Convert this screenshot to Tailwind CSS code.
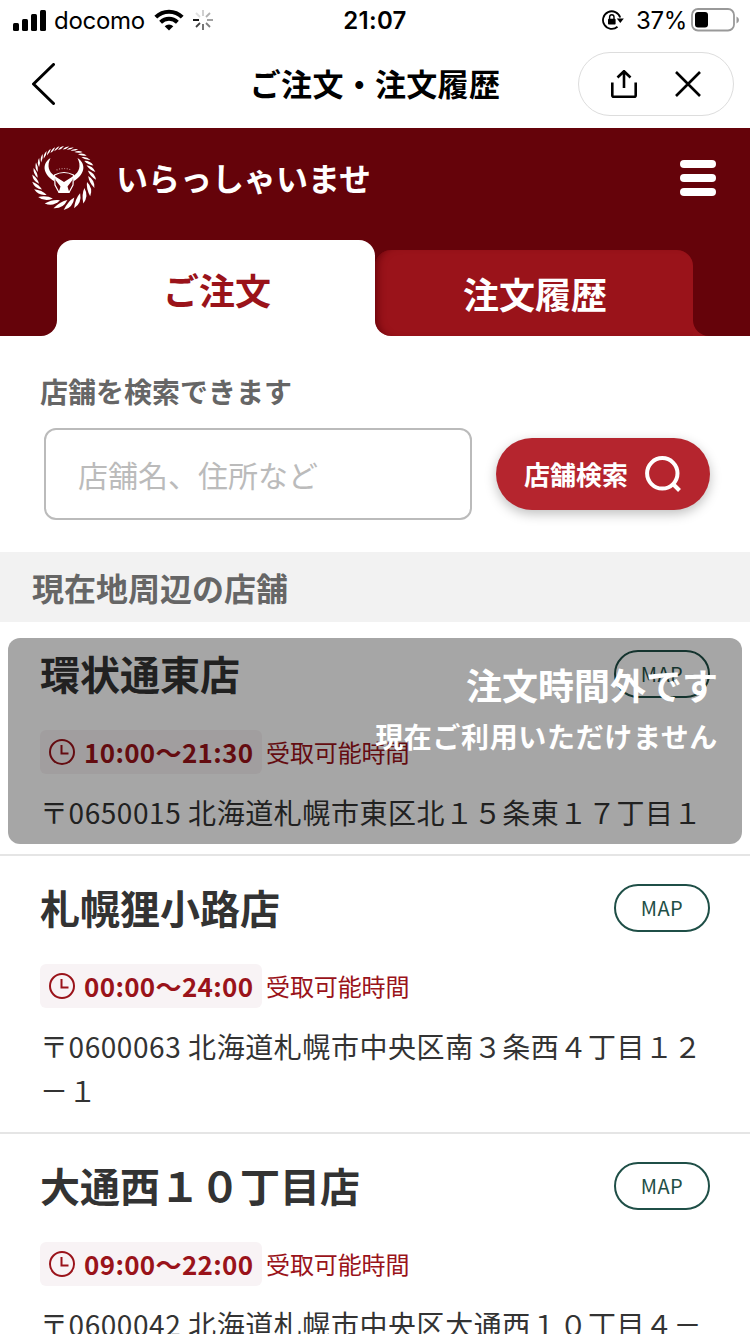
<!DOCTYPE html>
<html lang="ja">
<head>
  <meta charset="UTF-8">
  <title>ご注文・注文履歴</title>
  <script src="https://cdn.jsdelivr.net/npm/@tailwindcss/browser@4"></script>
</head>
<body class="bg-white w-[750px] h-[1334px] overflow-hidden font-['Noto_Sans_CJK_JP',sans-serif] text-[#333]">
  <!-- ステータスバー -->
  <div class="relative h-10 flex items-center justify-between pl-[13px] pr-[10px] font-['Inter',sans-serif] text-black text-2xl">
    <div class="flex items-center">
      <svg class="w-[33px] h-[21px]" viewBox="0 0 33 21">
        <rect x="0" y="13" width="6" height="8" rx="1.5"/>
        <rect x="9" y="9" width="6" height="12" rx="1.5"/>
        <rect x="18" y="4" width="6" height="17" rx="1.5"/>
        <rect x="27" y="0" width="6" height="21" rx="1.5"/>
      </svg>
      <span class="ml-2 pt-[2px] w-[91px] tracking-[-0.3px] whitespace-nowrap">docomo</span>
      <svg class="ml-[9px] w-[30px] h-[22px]" viewBox="0 0 30 22" fill="none" stroke="#000" stroke-width="4">
        <path d="M1.8 8.2a18.5 18.5 0 0 1 26.4 0"/>
        <path d="M6.6 13.2a12 12 0 0 1 16.8 0"/>
        <path d="M15 21.6l-4.3-4.3a6.2 6.2 0 0 1 8.6 0z" fill="#000" stroke="none"/>
      </svg>
      <svg class="ml-2 w-[22px] h-[22px]" viewBox="-11 -11 22 22" stroke="#000" stroke-width="1.8">
        <path d="M-10 0h6" />
        <path d="M-7 7l4-4" opacity=".75"/>
        <path d="M0 10V4" opacity=".6"/>
        <path d="M7 7L3 3" opacity=".5"/>
        <path d="M10 0H4" opacity=".4"/>
        <path d="M7-7L3-3" opacity=".3"/>
        <path d="M0-10v6" opacity=".2"/>
        <path d="M-7-7l4 4" opacity=".12"/>
      </svg>
    </div>
    <span class="absolute left-0 w-full pt-[2px] text-center font-semibold tracking-[0.3px]">21:07</span>
    <div class="flex items-center">
      <svg class="w-[22px] h-[20px]" viewBox="0 0 22 20" fill="none" stroke="#000" stroke-width="1.8">
        <path d="M18.2 7.5A8.8 8.8 0 1 0 15.5 16.8"/>
        <path d="M14.8 8.5h7l-3.5 4.6z" fill="#000" stroke="none"/>
        <rect x="6" y="8.8" width="7.6" height="5.8" rx=".8" fill="#000" stroke="none"/>
        <path d="M7.6 9V7a2.2 2.2 0 0 1 4.4 0v2" stroke-width="1.4"/>
      </svg>
      <span class="ml-3 pt-[2px] w-[51px] whitespace-nowrap tracking-[-0.3px]">37%</span>
      <svg class="ml-1 w-[49px] h-[24px]" viewBox="0 0 49 24">
        <rect x="1" y="1" width="42" height="21.5" rx="6" fill="none" stroke="#999" stroke-width="1.8"/>
        <rect x="4" y="4" width="13" height="15.5" rx="3"/>
        <path d="M45.5 8.5q2.5 1 2.5 3.5t-2.5 3.5z" fill="#999"/>
      </svg>
    </div>
  </div>

  <!-- ナビゲーション -->
  <nav class="relative h-[88px] flex items-center justify-between pl-[31px] pr-4">
    <svg class="w-6 h-[42px]" viewBox="0 0 24 42" fill="none" stroke="#000" stroke-width="3" stroke-linecap="round" stroke-linejoin="round">
      <path d="M22.5 1.5L2.5 21l20 19.5"/>
    </svg>
    <h1 class="absolute left-0 w-full pb-[2px] text-center text-[31px] font-semibold tracking-[0.3px] text-black pointer-events-none">ご注文・注文履歴</h1>
    <div class="w-[156px] h-16 border border-[#ddd] rounded-full flex items-center pl-8">
      <svg class="w-[26px] h-[28px]" viewBox="0 0 26 28" fill="none" stroke="#000" stroke-width="2.6">
        <path d="M1.3 12.5v12.7q0 1.5 1.5 1.5h20.4q1.5 0 1.5-1.5V12.5M13 18V1.5M6.5 7.5L13 1.2l6.5 6.3"/>
      </svg>
      <svg class="ml-[38px] w-[26px] h-[26px]" viewBox="0 0 26 26" fill="none" stroke="#000" stroke-width="2.6">
        <path d="M1 1l24 24M25 1L1 25"/>
      </svg>
    </div>
  </nav>

  <header class="bg-[#65030a] h-[208px] flex flex-col justify-between">
    <div class="h-[100px] flex items-center pl-8 pr-[34px]">
      <svg class="w-16 h-16" viewBox="0 0 64 64" fill="#fff">
        <g id="rope"></g>
        <path d="M18.500 12C8 19 13 30 22 35L22 29.500C17 26 14.500 20 18.500 12z"/>
        <path d="M45.500 12C56 19 51 30 42 35L42 29.500C47 26 49.500 20 45.500 12z"/>
        <path d="M22.500 29Q32 24 41.500 29L41 39 37 46.500H27L23 39z" fill="none" stroke="#fff" stroke-width="1.200"/>
        <path d="M22.500 30L32 36 41.500 30 40.500 34 35.500 40.500 37.500 47H26.500L28.500 40.500 23.500 34z"/>
        <path d="M24.500 24q7.500-3 15 0" fill="none" stroke="#fff" stroke-width="1.200" stroke-dasharray="1 1.600" opacity=".5"/>
      </svg>
      <p class="ml-5 pb-[2px] text-[32px] leading-none font-semibold text-white">いらっしゃいませ</p>
      <div class="ml-auto w-9 flex flex-col gap-[6px]">
        <span class="h-2 rounded-full bg-white"></span>
        <span class="h-2 rounded-full bg-white"></span>
        <span class="h-2 rounded-full bg-white"></span>
      </div>
    </div>
    <div class="flex items-end h-24">
      <div class="w-[57px] h-24 bg-white"><div class="h-full bg-[#65030a] rounded-br-2xl"></div></div>
      <div class="w-[318px] h-24 bg-white rounded-t-2xl flex items-center justify-center text-[36px] font-semibold text-[#9a131a] pt-[2px] pl-[2px]"><span>ご注文</span></div>
      <div class="w-[318px] h-[86px] bg-[linear-gradient(to_top,#fff_20px,#65030a_20px)]">
        <div class="h-full bg-[#9a131a] rounded-tl-2xl rounded-tr-2xl rounded-bl-2xl shadow-[inset_8px_0_8px_-6px_#65030a] flex items-center justify-center text-[36px] font-semibold text-white pl-[2px]"><span>注文履歴</span></div>
      </div>
      <div class="w-[57px] h-24 bg-[linear-gradient(to_top,#9a131a_20px,#65030a_20px)]"><div class="h-full bg-[#65030a] rounded-bl-2xl"></div></div>
    </div>
  </header>

  <!-- 店舗検索 -->
  <section class="h-[216px] pt-[35px] pl-10 pr-10">
    <h2 class="text-[28px] leading-[40px] font-semibold text-[#666]">店舗を検索できます</h2>
    <div class="mt-[17px] pl-1 flex items-center justify-between">
      <div class="w-[428px] h-[92px] border-2 border-[#bbb] rounded-xl flex items-center pl-8 text-[30px] text-[#bbb]"><span>店舗名、住所など</span></div>
      <button class="w-[214px] h-[72px] rounded-full bg-[#b5252e] shadow-[0_4px_12px_rgba(0,0,0,0.25)] flex items-center pl-7 text-[26px] font-semibold text-white">
        <span class="pb-[2px]">店舗検索</span>
        <svg class="ml-[17px] w-[36px] h-[36px]" viewBox="0 0 36 36" fill="none" stroke="#fff" stroke-width="4">
          <circle cx="17.300" cy="17.300" r="15.200"/>
          <path d="M27.500 27.500l7 7"/>
        </svg>
      </button>
    </div>
  </section>

  <h2 class="h-[70px] bg-[#f2f2f2] flex items-center pl-8 text-[32px] font-semibold text-[#666]">現在地周辺の店舗</h2>

  <main>
    <article class="relative h-[234px] border-b-2 border-[#e5e5e5] pt-7 px-10">
      <div class="flex justify-between h-20">
        <h3 class="text-[40px] leading-[46px] font-semibold">環状通東店</h3>
        <a class="w-24 h-12 border-2 border-[#1f4f47] rounded-full flex items-center justify-center text-[20px] tracking-[0.5px] text-[#1f4f47]">MAP</a>
      </div>
      <div class="flex items-center h-11 text-[#9a131a]">
        <div class="w-[222px] h-11 rounded-md bg-[#f8f3f5] flex items-center pl-[9px] text-[26px] font-bold">
          <svg class="w-[26px] h-[26px] mr-[9px]" viewBox="0 0 26 26" fill="none" stroke="currentColor" stroke-width="2"><circle cx="13" cy="13" r="12"/><path d="M12.500 6v8.500h7"/></svg>
          <span class="pb-[2px] tracking-[0.35px] whitespace-nowrap">10:00〜21:30</span>
        </div>
        <span class="ml-1 text-2xl tracking-[-0.1px]">受取可能時間</span>
      </div>
      <p class="mt-4 text-[28px] leading-[44px] tracking-[0.56px] whitespace-nowrap">〒0650015 北海道札幌市東区北１５条東１７丁目１</p>
      <div class="absolute left-2 right-2 top-4 h-[206px] rounded-xl bg-black/35 text-white font-semibold text-right pt-5 pr-6">
        <p class="text-[36px] leading-[52px]">注文時間外です</p>
        <p class="text-[28px] leading-[52px] tracking-[0.64px]">現在ご利用いただけません</p>
      </div>
    </article>

    <article class="h-[278px] border-b-2 border-[#e5e5e5] pt-7 px-10">
      <div class="flex justify-between h-20">
        <h3 class="text-[40px] leading-[46px] font-semibold">札幌狸小路店</h3>
        <a class="w-24 h-12 border-2 border-[#1f4f47] rounded-full flex items-center justify-center text-[20px] tracking-[0.5px] text-[#1f4f47]">MAP</a>
      </div>
      <div class="flex items-center h-11 text-[#9a131a]">
        <div class="w-[222px] h-11 rounded-md bg-[#f8f3f5] flex items-center pl-[9px] text-[26px] font-bold">
          <svg class="w-[26px] h-[26px] mr-[9px]" viewBox="0 0 26 26" fill="none" stroke="currentColor" stroke-width="2"><circle cx="13" cy="13" r="12"/><path d="M12.500 6v8.500h7"/></svg>
          <span class="pb-[2px] tracking-[0.35px] whitespace-nowrap">00:00〜24:00</span>
        </div>
        <span class="ml-1 text-2xl tracking-[-0.1px]">受取可能時間</span>
      </div>
      <p class="mt-4 text-[28px] leading-[44px] tracking-[0.56px] whitespace-nowrap">〒0600063 北海道札幌市中央区南３条西４丁目１２<br>－１</p>
    </article>

    <article class="h-[200px] pt-7 px-10">
      <div class="flex justify-between h-20">
        <h3 class="text-[40px] leading-[46px] font-semibold">大通西１０丁目店</h3>
        <a class="w-24 h-12 border-2 border-[#1f4f47] rounded-full flex items-center justify-center text-[20px] tracking-[0.5px] text-[#1f4f47]">MAP</a>
      </div>
      <div class="flex items-center h-11 text-[#9a131a]">
        <div class="w-[222px] h-11 rounded-md bg-[#f8f3f5] flex items-center pl-[9px] text-[26px] font-bold">
          <svg class="w-[26px] h-[26px] mr-[9px]" viewBox="0 0 26 26" fill="none" stroke="currentColor" stroke-width="2"><circle cx="13" cy="13" r="12"/><path d="M12.500 6v8.500h7"/></svg>
          <span class="pb-[2px] tracking-[0.35px] whitespace-nowrap">09:00〜22:00</span>
        </div>
        <span class="ml-1 text-2xl tracking-[-0.1px]">受取可能時間</span>
      </div>
      <p class="mt-4 text-[28px] leading-[44px] tracking-[0.56px] whitespace-nowrap">〒0600042 北海道札幌市中央区大通西１０丁目４－</p>
    </article>
  </main>

  <script>
    // ロゴの縄：上は細く、下は太い
    const rope = document.getElementById("rope");
    let a = 0;
    let html = "";
    while (a < 352) {
      const k = (1 - Math.cos(a * Math.PI / 180)) / 2;
      const step = 8 + 11 * k;
      const p = (deg, r) => {
        const t = deg * Math.PI / 180;
        return (32 - r * Math.sin(t)).toFixed(1) + " " + (32 - r * Math.cos(t)).toFixed(1);
      };
      const outer = 32;
      const inner = 28.5 - 6.5 * k;
      const mid = (outer + inner) / 2;
      const d = (outer - inner) * 0.38;
      html += `<path d="M${p(a, outer)}Q${p(a + step * 0.95, mid + d)} ${p(a + step * 1.5, inner)}Q${p(a + step * 0.55, mid - d)} ${p(a, outer)}z"/>`;
      a += step;
    }
    rope.innerHTML = html;
  </script>
</body>
</html>
